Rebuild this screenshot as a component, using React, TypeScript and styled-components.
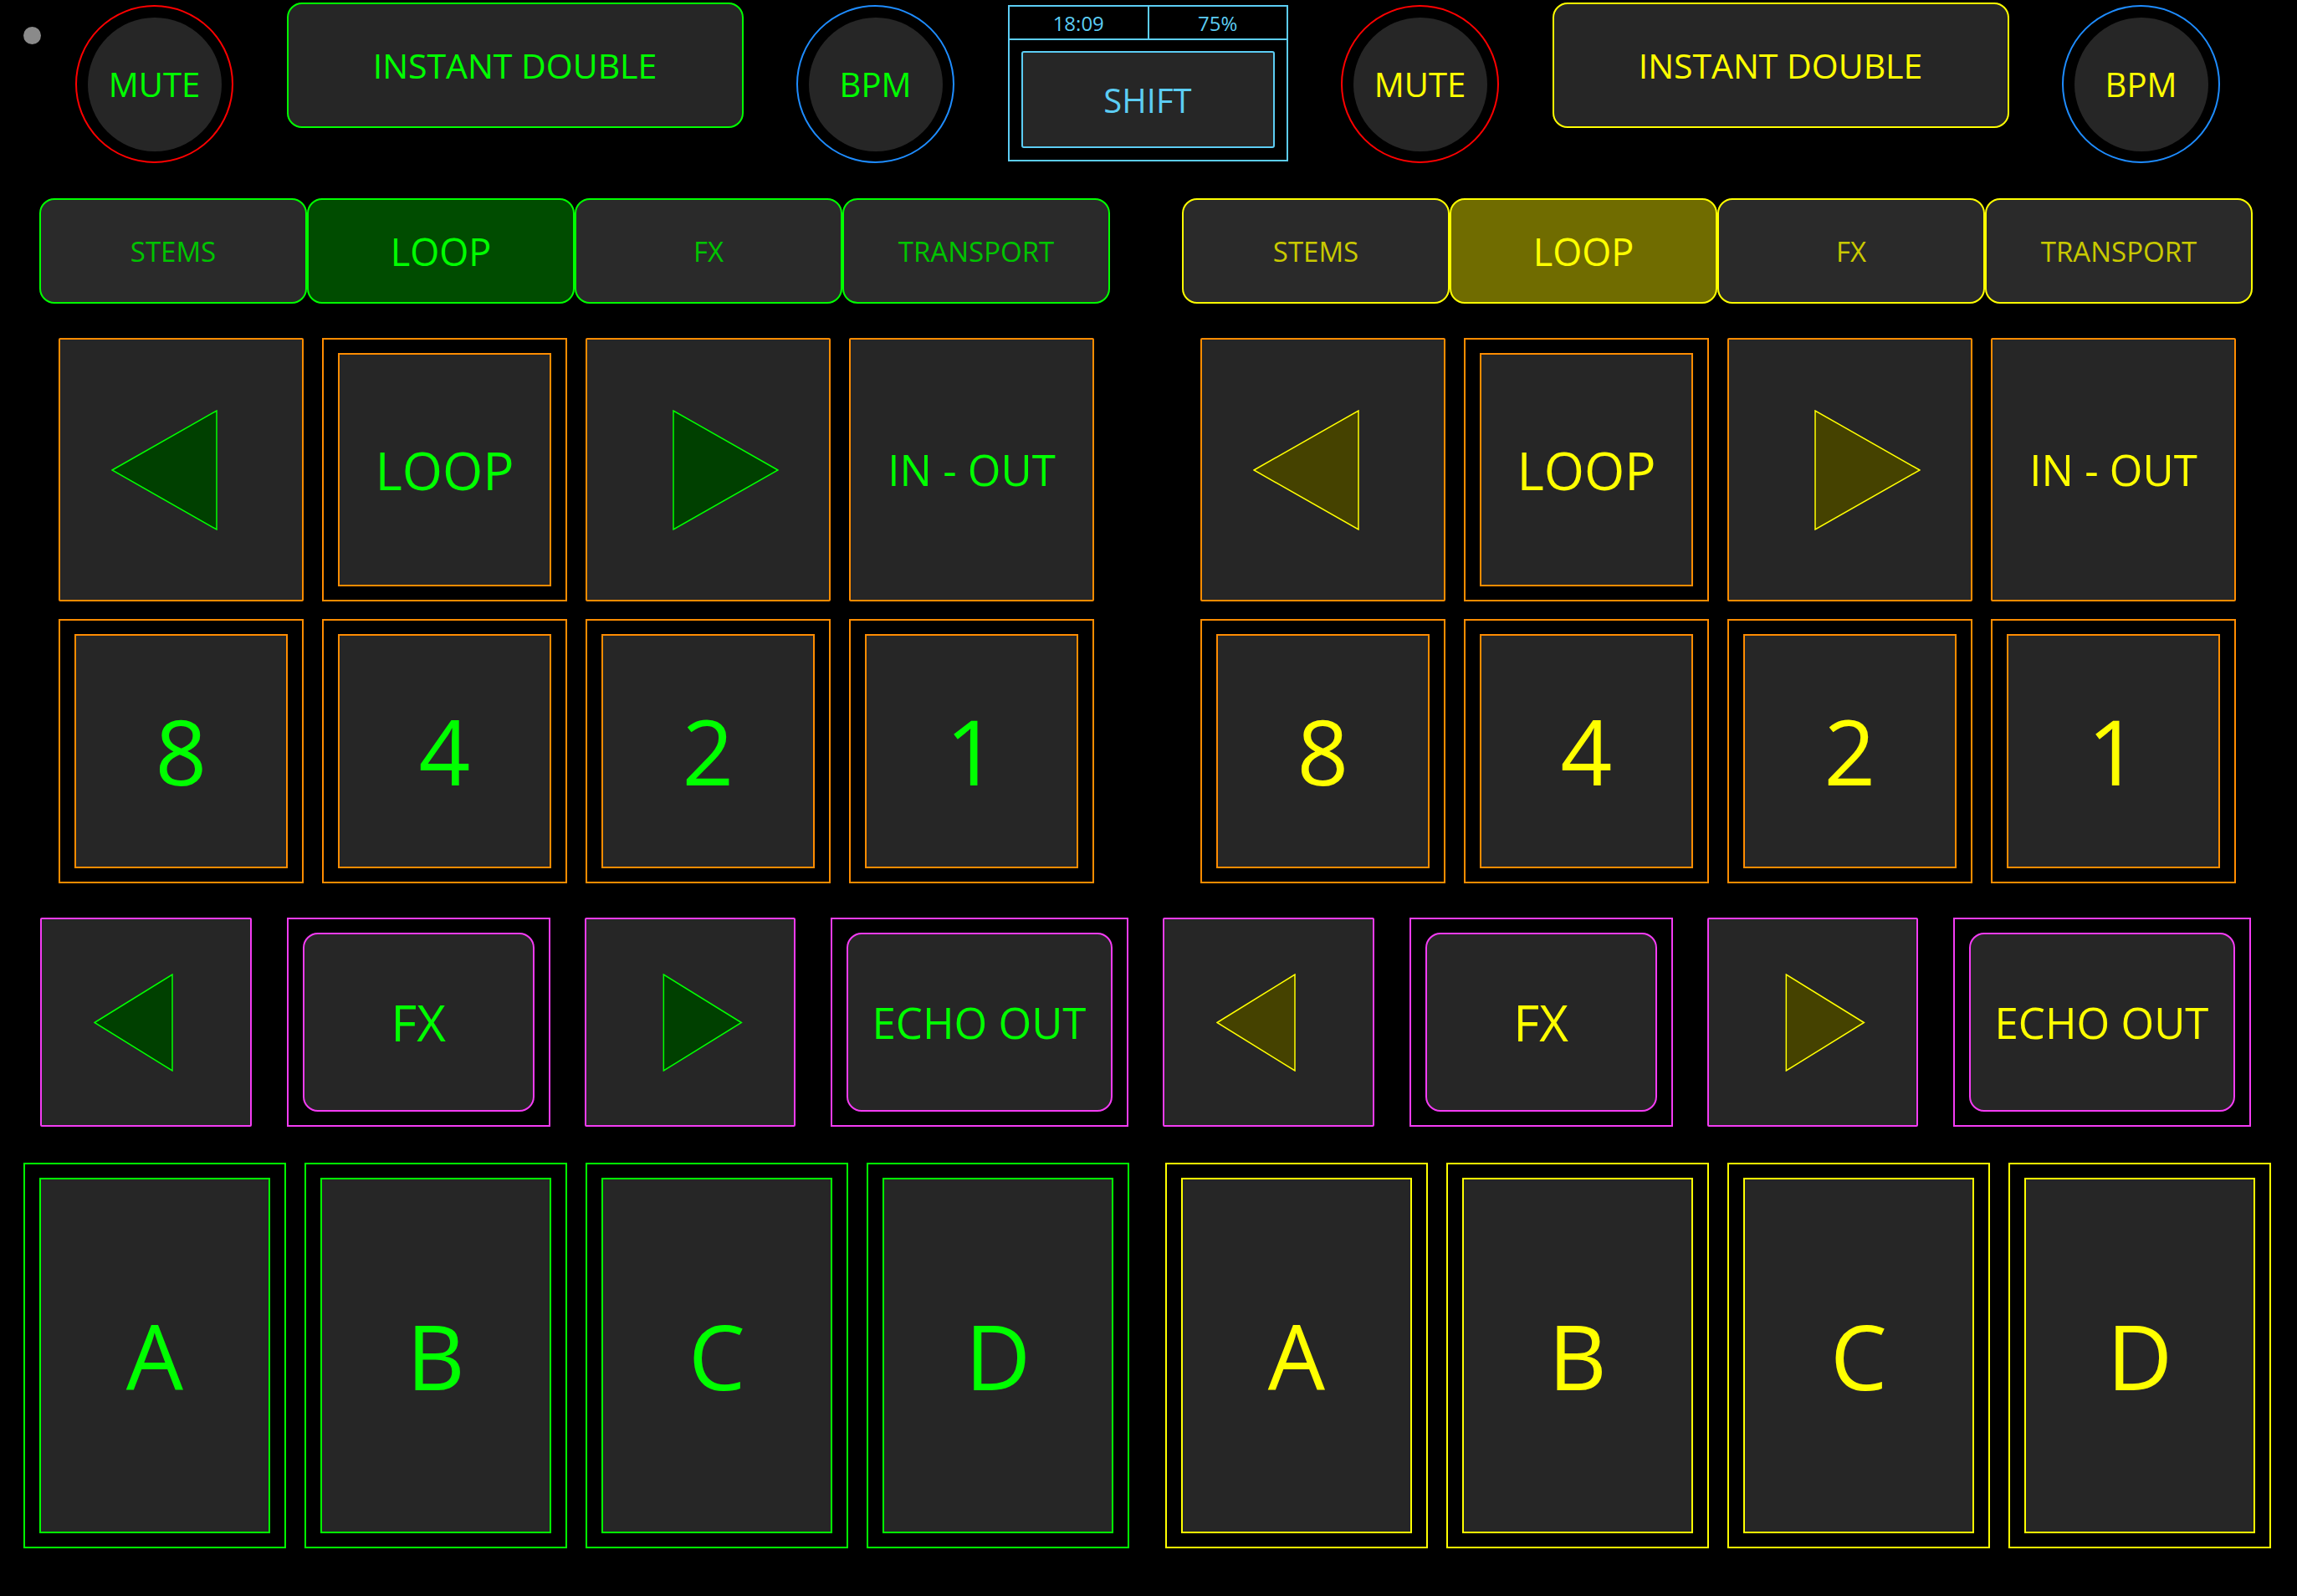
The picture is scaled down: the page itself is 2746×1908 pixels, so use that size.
import React from "react";
import styled, { createGlobalStyle } from "styled-components";

interface IDeck {
  main: string;
  dim: string;
  active: string;
  arrowFill: string;
}

const decks: IDeck[] = [
  { main: "#00ff00", dim: "#00c400", active: "#004c00", arrowFill: "#004000" },
  { main: "#ffff00", dim: "#c9c900", active: "#706c00", arrowFill: "#454200" },
];

const ORANGE = "#ff8c00";
const MAGENTA = "#f43cf4";
const SKY = "#5ccdf4";
const FACE = "#262626";

const GlobalStyle = createGlobalStyle`
  html, body {
    margin: 0;
    background: #000;
  }
  body {
    font-family: "Open Sans", "Noto Sans", sans-serif;
  }
`;

const Surface = styled.div`
  width: 2746px;
  height: 1908px;
  padding-top: 3px;
  box-sizing: border-box;
  display: flex;
  flex-direction: column;
  background: #000;
  overflow: hidden;
`;

const Row = styled.div<{ $left: number; $gap: number; $top: number }>`
  display: flex;
  align-items: flex-start;
  padding-left: ${(p) => p.$left}px;
  gap: ${(p) => p.$gap}px;
  margin-top: ${(p) => p.$top}px;
`;

const Group = styled.div<{ $gap: number }>`
  display: flex;
  align-items: flex-start;
  gap: ${(p) => p.$gap}px;
`;

/* ---- top bar ---- */

const Led = styled.div`
  width: 21px;
  height: 21px;
  margin-top: 29px;
  border-radius: 50%;
  background: #8a8a8a;
`;

const KnobRing = styled.div<{ $ring: string }>`
  width: 189px;
  height: 189px;
  margin-top: 3px;
  box-sizing: border-box;
  border-radius: 50%;
  border: 2px solid ${(p) => p.$ring};
  display: flex;
  align-items: center;
  justify-content: center;
`;

const KnobCap = styled.div<{ $color: string }>`
  width: 160px;
  height: 160px;
  border-radius: 50%;
  background: ${FACE};
  display: flex;
  align-items: center;
  justify-content: center;
  color: ${(p) => p.$color};
  font-size: 40px;
`;

const WideButton = styled.div<{ $color: string }>`
  width: 546px;
  height: 150px;
  box-sizing: border-box;
  border: 2px solid ${(p) => p.$color};
  border-radius: 18px;
  background: ${FACE};
  color: ${(p) => p.$color};
  font-size: 41px;
  display: flex;
  align-items: center;
  justify-content: center;
`;

const StatusPanel = styled.div`
  width: 335px;
  height: 187px;
  margin-top: 3px;
  box-sizing: border-box;
  border: 2px solid ${SKY};
  display: flex;
  flex-direction: column;
`;

const StatusStrip = styled.div`
  display: grid;
  grid-template-columns: 1fr 1fr;
  height: 38px;
  border-bottom: 2px solid ${SKY};
`;

const StatusCell = styled.div`
  display: flex;
  align-items: center;
  justify-content: center;
  color: ${SKY};
  font-size: 24px;

  & + & {
    border-left: 2px solid ${SKY};
  }
`;

const StatusBody = styled.div`
  flex: 1;
  display: flex;
  padding: 13px 14px 14px;
`;

const ShiftButton = styled.div`
  flex: 1;
  border: 2px solid ${SKY};
  border-radius: 3px;
  background: ${FACE};
  color: ${SKY};
  font-size: 40px;
  display: flex;
  align-items: center;
  justify-content: center;
`;

/* ---- page tabs ---- */

const TabStrip = styled.div`
  display: flex;
`;

const Tab = styled.div<{ $color: string; $bg: string }>`
  width: 320px;
  height: 126px;
  box-sizing: border-box;
  border: 2px solid ${(p) => p.$color};
  border-radius: 18px;
  background: ${(p) => p.$bg};
  display: flex;
  align-items: center;
  justify-content: center;
`;

const TabLabel = styled.span<{ $color: string; $on: boolean }>`
  color: ${(p) => p.$color};
  font-size: ${(p) => (p.$on ? 45 : 33)}px;
`;

/* ---- pads ---- */

const PadFrame = styled.div<{ $w: number; $h: number; $line: string; $double: boolean }>`
  width: ${(p) => p.$w}px;
  height: ${(p) => p.$h}px;
  box-sizing: border-box;
  border: 2px solid ${(p) => p.$line};
  border-radius: ${(p) => (p.$double ? 0 : 2)}px;
  padding: ${(p) => (p.$double ? "16px 17px" : "0")};
  background: ${(p) => (p.$double ? "#000" : FACE)};
  display: flex;
`;

const PadFace = styled.div<{ $line?: string; $radius: number }>`
  flex: 1;
  display: flex;
  align-items: center;
  justify-content: center;
  background: ${FACE};
  border: ${(p) => (p.$line ? `2px solid ${p.$line}` : "none")};
  border-radius: ${(p) => p.$radius}px;
`;

const PadLabel = styled.span<{ $size: number; $color: string }>`
  font-size: ${(p) => p.$size}px;
  color: ${(p) => p.$color};
  line-height: 1;
  white-space: nowrap;
`;

interface IArrow {
  dir: "left" | "right";
  w: number;
  h: number;
  fill: string;
  line: string;
}

// triangle drawn so that its centroid sits in the middle of the svg box
const Arrow = ({ dir, w, h, fill, line }: IArrow) => {
  const box = (w * 4) / 3;
  const pts =
    dir === "left"
      ? `1,${h / 2} ${w},1 ${w},${h - 1}`
      : `${box - 1},${h / 2} ${box - w},1 ${box - w},${h - 1}`;
  return (
    <svg width={box} height={h} viewBox={`0 0 ${box} ${h}`}>
      <polygon points={pts} fill={fill} stroke={line} strokeWidth={1.5} />
    </svg>
  );
};

interface IPad {
  w: number;
  h: number;
  line: string;
  double?: boolean;
  radius?: number;
  children?: React.ReactNode;
}

const Pad = ({ w, h, line, double = false, radius = 0, children }: IPad) => (
  <PadFrame $w={w} $h={h} $line={line} $double={double}>
    <PadFace $line={double ? line : undefined} $radius={radius}>
      {children}
    </PadFace>
  </PadFrame>
);

const tabs = ["STEMS", "LOOP", "FX", "TRANSPORT"];
const sizes = ["8", "4", "2", "1"];
const slots = ["A", "B", "C", "D"];

const TopDeck = ({ deck }: { deck: IDeck }) => (
  <>
    <KnobRing $ring="#ff0000">
      <KnobCap $color={deck.main}>MUTE</KnobCap>
    </KnobRing>
    <WideButton $color={deck.main}>INSTANT DOUBLE</WideButton>
    <KnobRing $ring="#1e8cff">
      <KnobCap $color={deck.main}>BPM</KnobCap>
    </KnobRing>
  </>
);

const LoopRow = ({ deck }: { deck: IDeck }) => (
  <Group $gap={22}>
    <Pad w={293} h={315} line={ORANGE}>
      <Arrow dir="left" w={126} h={144} fill={deck.arrowFill} line={deck.main} />
    </Pad>
    <Pad w={293} h={315} line={ORANGE} double>
      <PadLabel $size={62} $color={deck.main}>LOOP</PadLabel>
    </Pad>
    <Pad w={293} h={315} line={ORANGE}>
      <Arrow dir="right" w={126} h={144} fill={deck.arrowFill} line={deck.main} />
    </Pad>
    <Pad w={293} h={315} line={ORANGE}>
      <PadLabel $size={51} $color={deck.main}>IN - OUT</PadLabel>
    </Pad>
  </Group>
);

const SizeRow = ({ deck }: { deck: IDeck }) => (
  <Group $gap={22}>
    {sizes.map((s) => (
      <Pad key={s} w={293} h={316} line={ORANGE} double>
        <PadLabel $size={108} $color={deck.main}>{s}</PadLabel>
      </Pad>
    ))}
  </Group>
);

const FxRow = ({ deck }: { deck: IDeck }) => (
  <>
    <Pad w={253} h={250} line={MAGENTA}>
      <Arrow dir="left" w={94} h={117} fill={deck.arrowFill} line={deck.main} />
    </Pad>
    <Pad w={315} h={250} line={MAGENTA} double radius={18}>
      <PadLabel $size={60} $color={deck.main}>FX</PadLabel>
    </Pad>
    <Pad w={252} h={250} line={MAGENTA}>
      <Arrow dir="right" w={94} h={117} fill={deck.arrowFill} line={deck.main} />
    </Pad>
    <Pad w={356} h={250} line={MAGENTA} double radius={18}>
      <PadLabel $size={51} $color={deck.main}>ECHO OUT</PadLabel>
    </Pad>
  </>
);

const SlotRow = ({ deck }: { deck: IDeck }) => (
  <Group $gap={22}>
    {slots.map((s) => (
      <Pad key={s} w={314} h={461} line={deck.main} double>
        <PadLabel $size={108} $color={deck.main}>{s}</PadLabel>
      </Pad>
    ))}
  </Group>
);

const App = () => {
  const [left, right] = decks;
  return (
    <>
      <GlobalStyle />
      <Surface>
        <Row $left={28} $gap={63.5} $top={0}>
          <Group $gap={41}>
            <Led />
            <KnobRing $ring="#ff0000">
              <KnobCap $color={left.main}>MUTE</KnobCap>
            </KnobRing>
          </Group>
          <WideButton $color={left.main}>INSTANT DOUBLE</WideButton>
          <KnobRing $ring="#1e8cff">
            <KnobCap $color={left.main}>BPM</KnobCap>
          </KnobRing>
          <StatusPanel>
            <StatusStrip>
              <StatusCell>18:09</StatusCell>
              <StatusCell>75%</StatusCell>
            </StatusStrip>
            <StatusBody>
              <ShiftButton>SHIFT</ShiftButton>
            </StatusBody>
          </StatusPanel>
          <TopDeck deck={right} />
        </Row>

        <Row $left={47} $gap={86} $top={42}>
          {decks.map((deck, i) => (
            <TabStrip key={i}>
              {tabs.map((t) => {
                const on = t === "LOOP";
                return (
                  <Tab key={t} $color={deck.main} $bg={on ? deck.active : "#2a2a2a"}>
                    <TabLabel $on={on} $color={on ? deck.main : deck.dim}>
                      {t}
                    </TabLabel>
                  </Tab>
                );
              })}
            </TabStrip>
          ))}
        </Row>

        <Row $left={70} $gap={127} $top={41}>
          <LoopRow deck={left} />
          <LoopRow deck={right} />
        </Row>

        <Row $left={70} $gap={127} $top={21}>
          <SizeRow deck={left} />
          <SizeRow deck={right} />
        </Row>

        <Row $left={48} $gap={41.5} $top={41}>
          <FxRow deck={left} />
          <FxRow deck={right} />
        </Row>

        <Row $left={28} $gap={43} $top={43}>
          <SlotRow deck={left} />
          <SlotRow deck={right} />
        </Row>
      </Surface>
    </>
  );
};

export default App;
